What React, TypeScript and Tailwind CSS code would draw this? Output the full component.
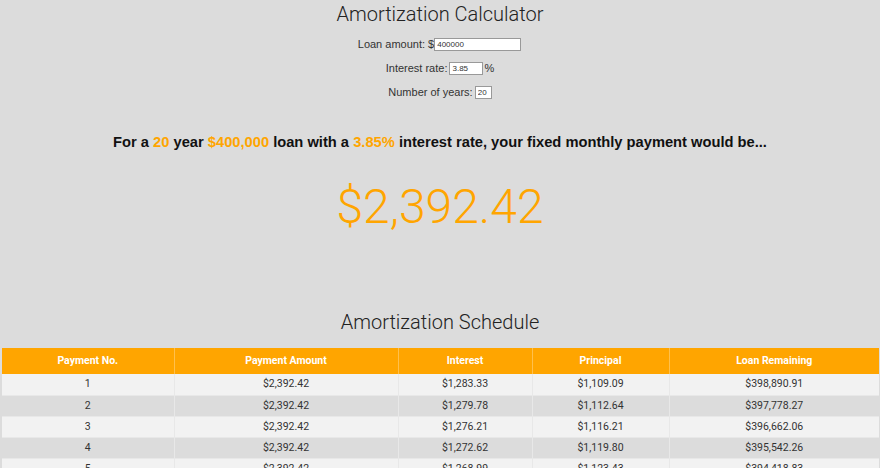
const rows = [
  ["1", "$2,392.42", "$1,283.33", "$1,109.09", "$398,890.91"],
  ["2", "$2,392.42", "$1,279.78", "$1,112.64", "$397,778.27"],
  ["3", "$2,392.42", "$1,276.21", "$1,116.21", "$396,662.06"],
  ["4", "$2,392.42", "$1,272.62", "$1,119.80", "$395,542.26"],
  ["5", "$2,392.42", "$1,268.99", "$1,123.43", "$394,418.83"],
];

const headers = ["Payment No.", "Payment Amount", "Interest", "Principal", "Loan Remaining"];
const widths = ["w-[172px]", "w-[224px]", "w-[134px]", "w-[137px]", "w-[210px]"];

export default function App() {
  return (
    <div className="min-h-[468px] bg-[#dcdcdc] font-['Liberation_Sans',Arial,sans-serif] text-[#222]">
      <h1 className="pt-[1px] text-center text-[20px] leading-[26px] font-['Roboto','Liberation_Sans',sans-serif] font-light text-[#222]">
        Amortization Calculator
      </h1>

      <div className="mt-[10px] flex flex-col items-center gap-[10px] text-[11px] text-[#333]">
        <div className="flex h-[14px] items-center pr-[1px]">
          <span>Loan amount: $</span>
          <input
            className="h-[13px] w-[87px] border border-[#999] bg-white px-[2px] text-[8px] text-[#333] outline-none"
            defaultValue="400000"
          />
        </div>
        <div className="flex h-[14px] items-center">
          <span className="mr-[2px]">Interest rate:</span>
          <input
            className="h-[13px] w-[34px] border border-[#999] bg-white px-[2px] text-[8px] text-[#333] outline-none"
            defaultValue="3.85"
          />
          <span className="ml-[1px]">%</span>
        </div>
        <div className="flex h-[14px] items-center">
          <span className="mr-[2px]">Number of years:</span>
          <input
            className="h-[13px] w-[17px] border border-[#999] bg-white px-[2px] text-[8px] text-[#333] outline-none"
            defaultValue="20"
          />
        </div>
      </div>

      <p className="mt-[34px] text-center text-[14.7px] leading-[18px] font-bold text-[#111]">
        For a <span className="text-[#ffa500]">20</span> year{" "}
        <span className="text-[#ffa500]">$400,000</span> loan with a{" "}
        <span className="text-[#ffa500]">3.85%</span> interest rate, your fixed monthly payment would be...
      </p>

      <div className="mt-[30px] text-center text-[48px] leading-[52px] font-['Roboto','Liberation_Sans',sans-serif] font-light text-[#ffa500]">
        $2,392.42
      </div>

      <h2 className="mt-[76px] text-center text-[20px] leading-[26px] font-['Roboto','Liberation_Sans',sans-serif] font-light text-[#222]">
        Amortization Schedule
      </h2>

      <div className="mt-[13px] px-[2px] pr-[1px]">
        <table className="w-full table-fixed border-collapse font-['Roboto','Liberation_Sans',sans-serif] text-[10.5px]">
          <thead>
            <tr className="h-[26px] bg-[#ffa500] text-white">
              {headers.map((h, i) => (
                <th
                  key={h}
                  className={`${widths[i]} border-r border-[#ffc04d] font-bold last:border-r-0`}
                >
                  {h}
                </th>
              ))}
            </tr>
          </thead>
          <tbody>
            {rows.map((r, i) => (
              <tr
                key={r[0]}
                className={`h-[21px] border-b border-[#e8e8e8] text-[#333] ${i % 2 === 0 ? "bg-[#f2f2f2]" : "bg-[#dcdcdc]"}`}
              >
                {r.map((c, j) => (
                  <td key={j} className="border-r border-[#e8e8e8] text-center last:border-r-0">
                    {c}
                  </td>
                ))}
              </tr>
            ))}
          </tbody>
        </table>
      </div>
    </div>
  );
}
